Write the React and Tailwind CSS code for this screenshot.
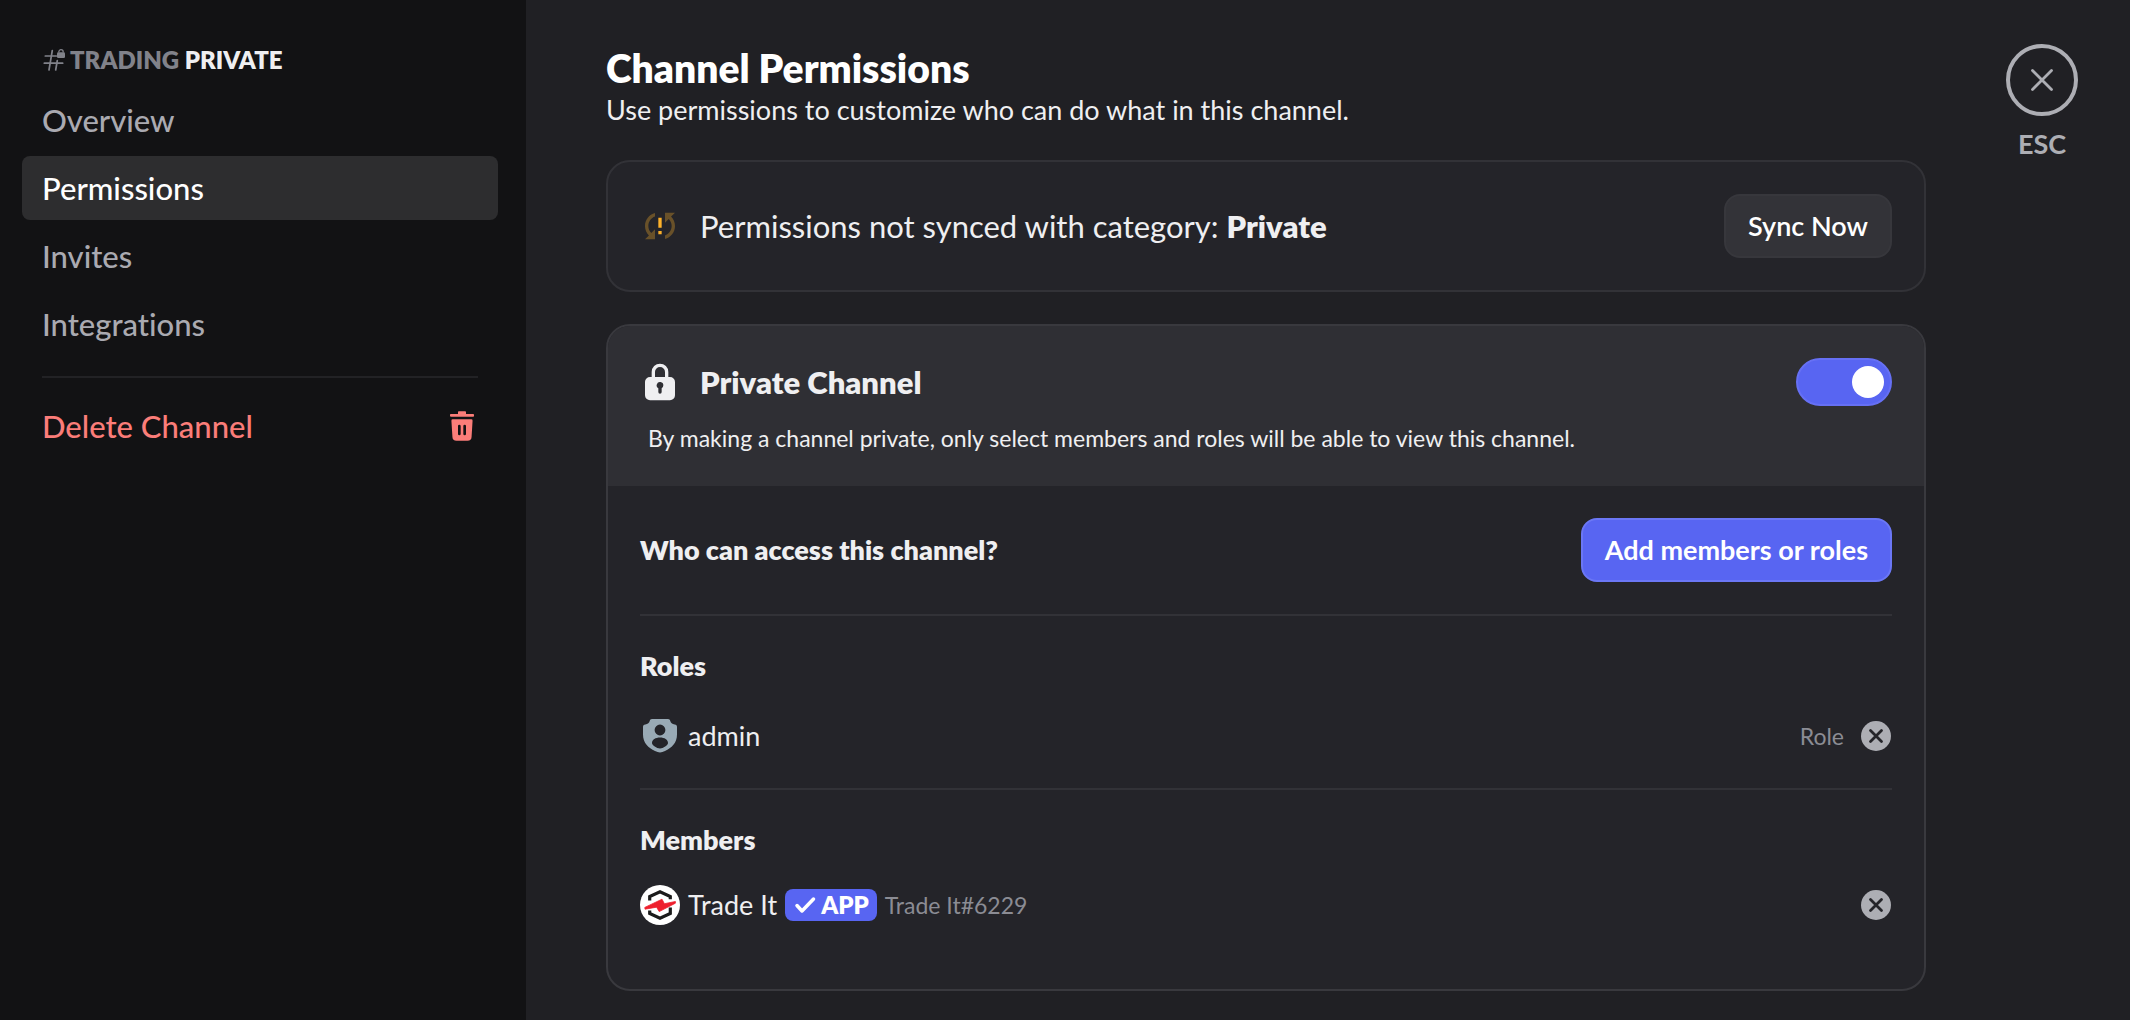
import { useState } from "react";
import clsx from "clsx";

const navItems = ["Overview", "Permissions", "Invites", "Integrations"];

function HashLockIcon() {
  return (
    <svg className="size-6 text-[#81828a]" viewBox="0 0 24 24" fill="none" aria-hidden="true">
      <path
        d="M10.3 2.5 7 22M15.3 12.5 13.7 22M3.3 8h11M2.3 15.2h18.4"
        stroke="currentColor"
        strokeWidth="1.7"
        strokeLinecap="round"
      />
      <path d="M16.8 4.6V3.9a2.2 2.2 0 0 1 4.4 0v.7" stroke="currentColor" strokeWidth="1.3" />
      <rect x="15" y="4.2" width="8" height="5.8" rx="1.3" fill="currentColor" />
    </svg>
  );
}

function TrashIcon() {
  return (
    <svg className="size-8" viewBox="0 0 24 24" fill="currentColor" aria-hidden="true">
      <path d="M14.25 1c.41 0 .75.34.75.75V3h5.25c.41 0 .75.34.75.75v.5c0 .41-.34.75-.75.75H3.75A.75.75 0 0 1 3 4.25v-.5c0-.41.34-.75.75-.75H9V1.75c0-.41.34-.75.75-.75h4.5Z" />
      <path
        fillRule="evenodd"
        d="M5.06 7a1 1 0 0 0-1 1.06l.76 12.13a3 3 0 0 0 3 2.81h8.36a3 3 0 0 0 3-2.81l.75-12.13a1 1 0 0 0-1-1.06H5.07ZM11 12a1 1 0 1 0-2 0v6a1 1 0 1 0 2 0v-6Zm3-1a1 1 0 0 1 1 1v6a1 1 0 1 1-2 0v-6a1 1 0 0 1 1-1Z"
      />
    </svg>
  );
}

function SyncProblemIcon() {
  return (
    <svg className="size-10 shrink-0 text-[#fdb12a]" viewBox="0 0 24 24" fill="currentColor" aria-hidden="true">
      <path
        opacity="0.32"
        d="M3 12c0 2.21.91 4.2 2.36 5.64L3 20h6v-6l-2.24 2.24C5.68 15.15 5 13.66 5 12c0-2.61 1.67-4.83 4-5.65V4.26C5.55 5.15 3 8.27 3 12ZM21 4h-6v6l2.24-2.24C18.32 8.85 19 10.34 19 12c0 2.61-1.67 4.83-4 5.65v2.09c3.45-.89 6-4.01 6-7.74 0-2.21-.91-4.2-2.36-5.64L21 4Z"
      />
      <path d="M11 17h2v-2h-2v2ZM11 13h2V7h-2v6Z" />
    </svg>
  );
}

function LockIcon() {
  return (
    <svg className="size-10 shrink-0" viewBox="0 0 24 24" fill="currentColor" aria-hidden="true">
      <path
        fillRule="evenodd"
        d="M6 9h1V6a5 5 0 0 1 10 0v3h1a3 3 0 0 1 3 3v8a3 3 0 0 1-3 3H6a3 3 0 0 1-3-3v-8a3 3 0 0 1 3-3Zm9-3v3H9V6a3 3 0 1 1 6 0Zm-1 8a2 2 0 0 1-1 1.73V18a1 1 0 1 1-2 0v-2.27A2 2 0 1 1 14 14Z"
      />
    </svg>
  );
}

function RoleShieldIcon() {
  return (
    <svg className="size-10 shrink-0 text-[#99aab5]" viewBox="0 0 40 40" fill="currentColor" aria-hidden="true">
      <path
        fillRule="evenodd"
        d="M12 3h16c1.3 0 1.9.7 2.2 1.8.6 2.2 1.9 3.4 4.5 3.7 1.6.2 2.3 1 2.3 2.5v7.5c0 8.5-5.5 13.5-12 16.4-1.8.7-3.4 1.5-5 1.5s-3.2-.8-5-1.5C8.500 32 3 27 3 18.500V11c0-1.500.7-2.300 2.300-2.500 2.600-.3 3.900-1.500 4.500-3.700C10.100 3.700 10.700 3 12 3Zm8 5.600a5.400 5.400 0 1 0 0 10.800 5.400 5.400 0 0 0 0-10.800Zm0 13c-4.500 0-8 2.200-8 5.400 0 2.300 4.800 5.400 8 5.400s8-3.100 8-5.400c0-3.200-3.500-5.400-8-5.400Z"
      />
    </svg>
  );
}

function TradeItLogo() {
  return (
    <svg className="size-10 shrink-0" viewBox="0 0 40 40" fill="none" aria-hidden="true">
      <circle cx="20" cy="20" r="20" fill="#fff" />
      <path
        d="M9.7 15.5v-3.9L20 6.7l10.3 4.9v2.6M9.7 25.5v2.9L20 33.3l10.3-4.9v-5.9"
        stroke="#1b1b1b"
        strokeWidth="3.2"
      />
      <path
        d="m4.8 22.4 17.2-8.2 2.4 4.5 11-2.2v1.7L19.2 26.6l-2.6-4.4L5 24.2Z"
        fill="#ee1f2d"
        stroke="#ee1f2d"
        strokeWidth="0.8"
        strokeLinejoin="round"
      />
    </svg>
  );
}

function RemoveButton({ label }) {
  return (
    <button type="button" aria-label={label} className="rounded-full cursor-pointer">
      <svg className="size-8 text-[#adaeb4]" viewBox="0 0 32 32" fill="none" aria-hidden="true">
        <circle cx="16" cy="16" r="15" fill="currentColor" />
        <path d="m10.5 10.5 11 11m0-11-11 11" stroke="#242429" strokeWidth="2.8" strokeLinecap="round" />
      </svg>
    </button>
  );
}

function Sidebar() {
  return (
    <aside className="w-[526px] shrink-0 bg-[#121214] pl-[22px] pr-7 pt-11">
      <h2 className="flex items-center gap-1 px-5 mb-3 text-2xl font-extrabold">
        <HashLockIcon />
        <span>
          <span className="text-[#81828a]">TRADING</span> PRIVATE
        </span>
      </h2>
      <nav className="flex flex-col gap-1 text-[31px] font-medium">
        {navItems.map((item) => (
          <a
            key={item}
            href="#"
            className={clsx(
              "flex items-center h-16 px-5 rounded-lg",
              item === "Permissions" ? "bg-[#2d2d2f] text-white" : "text-[#aaaab1]"
            )}
          >
            {item}
          </a>
        ))}
        <hr className="mx-5 mt-4 mb-3 border-t-2 border-[#222225]" />
        <button
          type="button"
          className="flex items-center justify-between h-16 px-5 rounded-lg text-[#fb7d79] cursor-pointer"
        >
          Delete Channel
          <TrashIcon />
        </button>
      </nav>
    </aside>
  );
}

export default function App() {
  const [isPrivate, setIsPrivate] = useState(true);

  return (
    <div className="flex min-h-screen bg-[#202024] font-['Lato',sans-serif] text-[#efeff1] [font-variant-ligatures:none]">
      <Sidebar />

      <main className="flex flex-1 gap-20 pt-11 pl-20 pr-13">
        <div className="flex-1">
          <h1 className="text-[39px] leading-12 font-extrabold text-white">Channel Permissions</h1>
          <p className="mb-8 text-[27px] leading-9">
            Use permissions to customize who can do what in this channel.
          </p>

          {/* Sync status */}
          <section className="flex items-center gap-5 p-8 mb-8 rounded-3xl border-2 border-[#323237] bg-[#242429]">
            <SyncProblemIcon />
            <p className="flex-1 text-[31px]">
              Permissions not synced with category: <strong className="font-extrabold">Private</strong>
            </p>
            <button
              type="button"
              className="h-16 px-[22px] rounded-2xl border-2 border-[#37373c] bg-[#333338] text-[27px] font-semibold text-white cursor-pointer"
            >
              Sync Now
            </button>
          </section>

          <section className="rounded-3xl border-2 border-[#39393e] bg-[#242429] overflow-hidden">
            {/* Private toggle */}
            <div className="p-8 bg-[#2f2f34]">
              <div className="flex items-center gap-5">
                <LockIcon />
                <label htmlFor="private-channel" className="flex-1 text-[31px] font-extrabold">
                  Private Channel
                </label>
                <input
                  id="private-channel"
                  type="checkbox"
                  role="switch"
                  checked={isPrivate}
                  onChange={(e) => setIsPrivate(e.target.checked)}
                  className="flex items-center appearance-none w-24 h-12 px-1.5 rounded-full border-2 border-[#55555c] bg-[#44444a] checked:justify-end checked:border-[#6670f4] checked:bg-[#5865f2] before:size-8 before:rounded-full before:bg-white cursor-pointer"
                />
              </div>
              <p className="mt-4 px-2 text-[23px] leading-8">
                By making a channel private, only select members and roles will be able to view this
                channel.
              </p>
            </div>

            <div className="px-8 pt-8 pb-16">
              <div className="flex items-center justify-between pb-8 border-b-2 border-[#323237]">
                <h2 className="text-[27px] font-extrabold">Who can access this channel?</h2>
                <button
                  type="button"
                  className="h-16 px-[22px] rounded-2xl border-2 border-[#6b77f5] bg-[#5865f2] text-[27px] font-bold text-white cursor-pointer"
                >
                  Add members or roles
                </button>
              </div>

              {/* Roles */}
              <div className="py-8 border-b-2 border-[#323237]">
                <h3 className="mb-8 text-[27px] leading-9 font-extrabold">Roles</h3>
                <div className="flex items-center h-10 gap-2">
                  <RoleShieldIcon />
                  <span className="flex-1 text-[27px]">admin</span>
                  <span className="mr-2 text-[23px] text-[#8b8c94]">Role</span>
                  <RemoveButton label="Remove admin" />
                </div>
              </div>

              {/* Members */}
              <div className="pt-8">
                <h3 className="mb-[27px] text-[27px] leading-9 font-extrabold">Members</h3>
                <div className="flex items-center h-10 gap-2">
                  <TradeItLogo />
                  <span className="text-[27px]">Trade It</span>
                  <span className="flex items-center h-8 gap-1 px-2 rounded-lg bg-[#5865f2] text-2xl font-extrabold text-white">
                    <svg className="size-6" viewBox="0 0 24 24" fill="none" aria-hidden="true">
                      <path
                        d="m4 12.5 5 5.5L20.5 6"
                        stroke="currentColor"
                        strokeWidth="3.5"
                        strokeLinecap="round"
                        strokeLinejoin="round"
                      />
                    </svg>
                    APP
                  </span>
                  <span className="flex-1 text-[23px] text-[#8b8c94]">Trade It#6229</span>
                  <RemoveButton label="Remove Trade It" />
                </div>
              </div>
            </div>
          </section>
        </div>

        <div className="flex flex-col items-center gap-3 w-18 text-[#adaeb4]">
          <button
            type="button"
            aria-label="Close"
            className="flex items-center justify-center size-18 rounded-full border-4 border-[#adaeb4] cursor-pointer"
          >
            <svg className="size-6" viewBox="0 0 24 24" fill="none" aria-hidden="true">
              <path d="m2.5 2.5 19 19m0-19-19 19" stroke="currentColor" strokeWidth="2.8" strokeLinecap="round" />
            </svg>
          </button>
          <span className="text-[27px] leading-8 font-bold">ESC</span>
        </div>
      </main>
    </div>
  );
}
